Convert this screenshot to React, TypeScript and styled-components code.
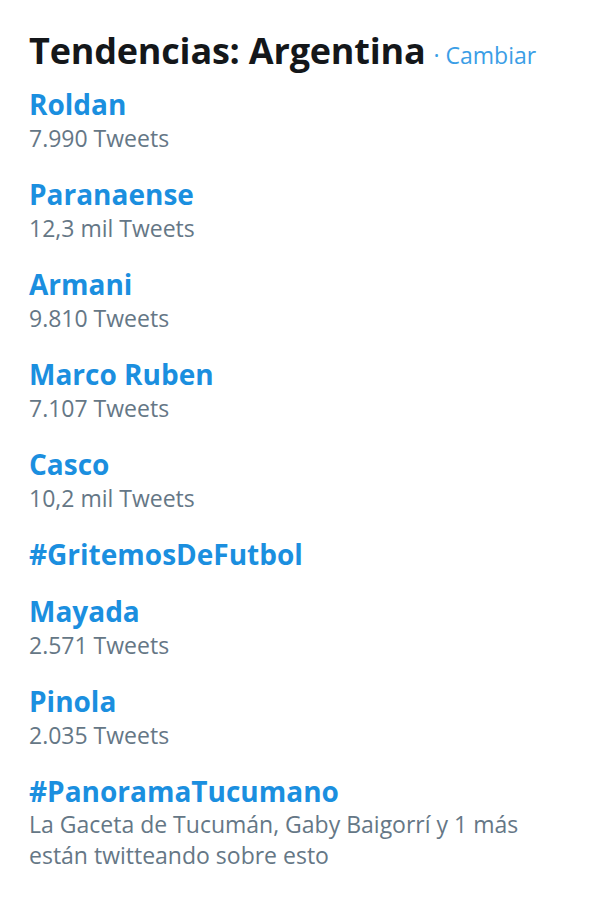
import styled, { createGlobalStyle } from "styled-components";

const GlobalStyle = createGlobalStyle`
  body {
    margin: 0;
    background: #ffffff;
    font-family: "Open Sans", "Noto Sans", "Liberation Sans", sans-serif;
  }
`;

const Panel = styled.div`
  box-sizing: border-box;
  width: 600px;
  height: 900px;
  padding: 28px 29px 0;
  background: #ffffff;
`;

const Header = styled.div`
  display: flex;
  align-items: baseline;
  gap: 8px;
  line-height: 46px;
  margin-bottom: 9px;

  h2 {
    margin: 0;
    font-size: 36px;
    font-weight: 700;
    color: #14171a;
    letter-spacing: -0.2px;
  }
`;

const Change = styled.a`
  font-size: 23px;
  color: #3b9ee6;
  text-decoration: none;

  &::before {
    content: "· ";
    color: #3b9ee6;
  }
`;

const List = styled.ul`
  list-style: none;
  margin: 0;
  padding: 0;
  display: flex;
  flex-direction: column;
  gap: 22px;
`;

const Trend = styled.li`
  display: flex;
  flex-direction: column;
`;

const Name = styled.a`
  font-size: 28px;
  font-weight: 700;
  line-height: 35px;
  color: #1b8fdf;
  text-decoration: none;
`;

const Meta = styled.span`
  font-size: 23px;
  line-height: 33px;
  color: #657786;
`;

const Description = styled(Meta)`
  max-width: 525px;
  line-height: 31px;
`;

type TrendItem = { name: string; meta?: string; long?: boolean };

const trends: TrendItem[] = [
  { name: "Roldan", meta: "7.990 Tweets" },
  { name: "Paranaense", meta: "12,3 mil Tweets" },
  { name: "Armani", meta: "9.810 Tweets" },
  { name: "Marco Ruben", meta: "7.107 Tweets" },
  { name: "Casco", meta: "10,2 mil Tweets" },
  { name: "#GritemosDeFutbol" },
  { name: "Mayada", meta: "2.571 Tweets" },
  { name: "Pinola", meta: "2.035 Tweets" },
  {
    name: "#PanoramaTucumano",
    meta: "La Gaceta de Tucumán, Gaby Baigorrí y 1 más están twitteando sobre esto",
    long: true,
  },
];

const App = () => {
  return (
    <>
      <GlobalStyle />
      <Panel>
        <Header>
          <h2>Tendencias: Argentina</h2>
          <Change href="#">Cambiar</Change>
        </Header>
        <List>
          {trends.map((t) => (
            <Trend key={t.name}>
              <Name href="#">{t.name}</Name>
              {t.meta &&
                (t.long ? (
                  <Description>{t.meta}</Description>
                ) : (
                  <Meta>{t.meta}</Meta>
                ))}
            </Trend>
          ))}
        </List>
      </Panel>
    </>
  );
};

export default App;
